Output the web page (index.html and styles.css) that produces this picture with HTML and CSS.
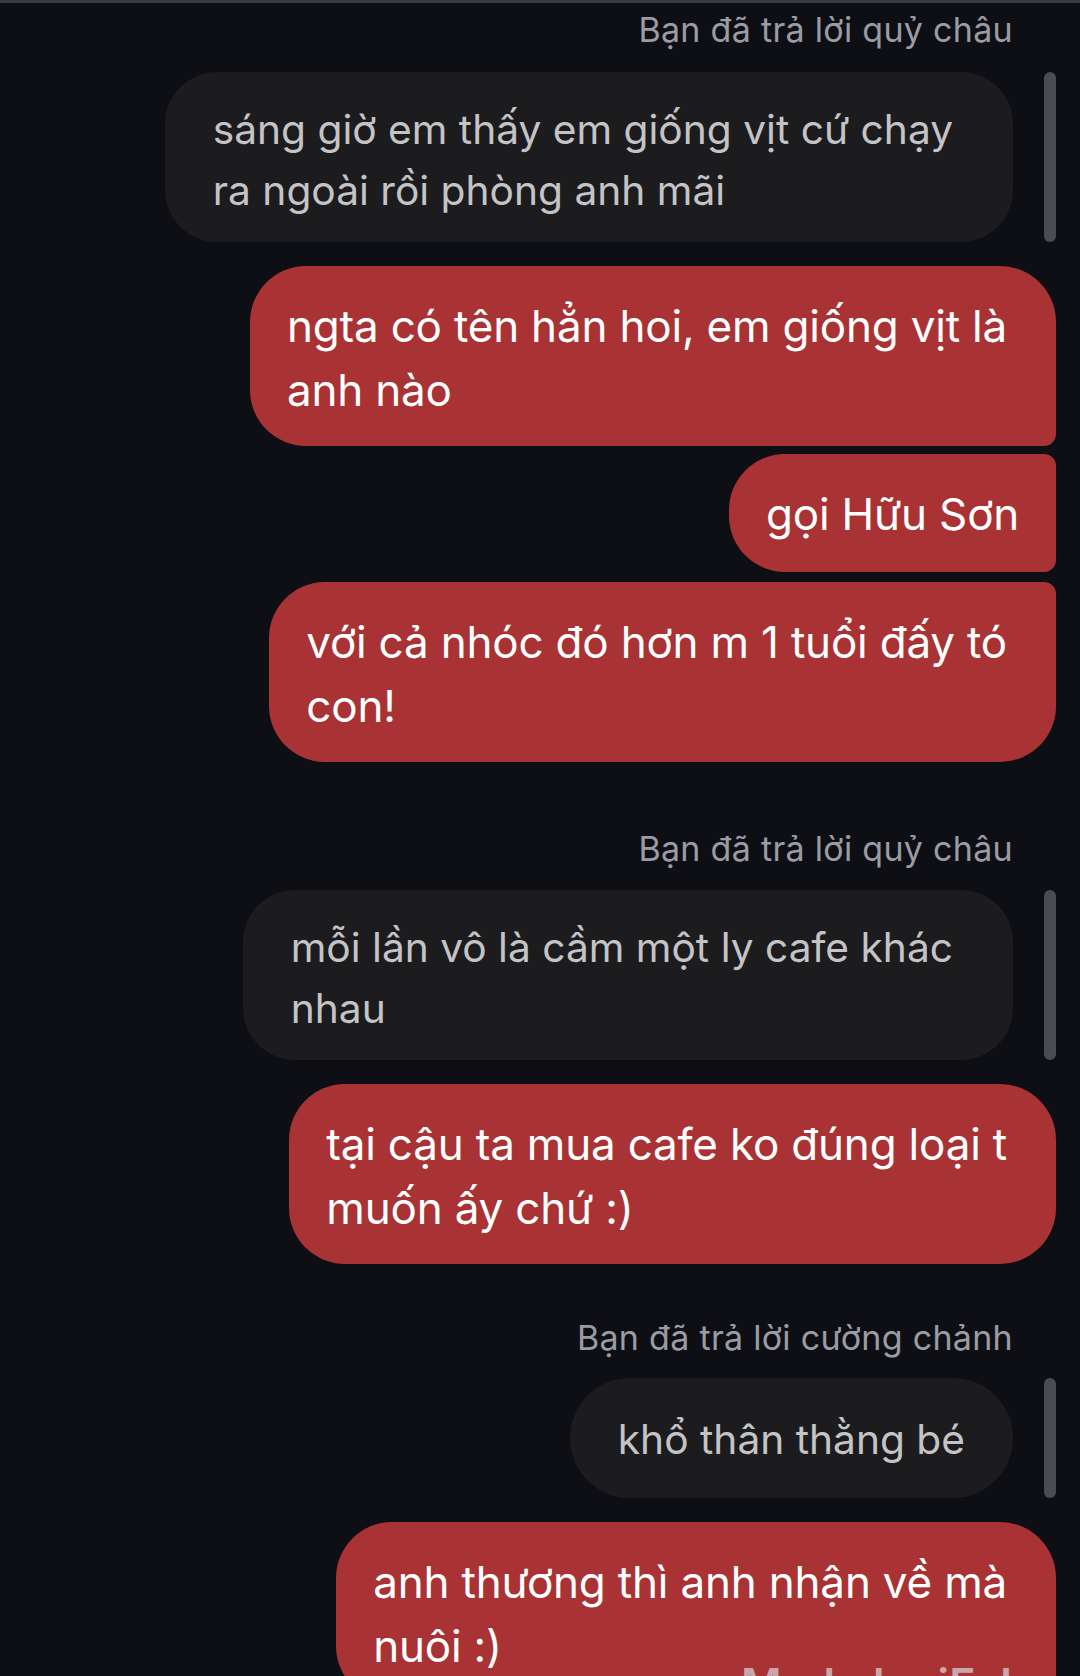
FILE: index.html
```html
<!DOCTYPE html>
<html lang="vi">
<head>
<meta charset="utf-8">
<title>Chat</title>
<link rel="stylesheet" href="styles.css">
</head>
<body>
<div class="screen">
  <div class="topline"></div>
  <main class="thread">
    <div class="reply-label first">Bạn đã trả lời quỷ châu</div>
    <div class="row-in">
      <div class="bubble grey wrap">sáng giờ em thấy em giống vịt cứ chạy<br>ra ngoài rồi phòng anh mãi</div>
      <div class="bar"></div>
    </div>
    <div class="bubble red wrap r-first gap-l">ngta có tên hẳn hoi, em giống vịt là<br>anh nào</div>
    <div class="bubble red r-mid gap-s">gọi Hữu Sơn</div>
    <div class="bubble red wrap r-last gap-m">với cả nhóc đó hơn m 1 tuổi đấy tó<br>con!</div>

    <div class="reply-label second">Bạn đã trả lời quỷ châu</div>
    <div class="row-in">
      <div class="bubble grey wrap">mỗi lần vô là cầm một ly cafe khác<br>nhau</div>
      <div class="bar"></div>
    </div>
    <div class="bubble red wrap gap-l">tại cậu ta mua cafe ko đúng loại t<br>muốn ấy chứ :)</div>

    <div class="reply-label third">Bạn đã trả lời cường chảnh</div>
    <div class="row-in">
      <div class="bubble grey single">khổ thân thằng bé</div>
      <div class="bar"></div>
    </div>
    <div class="bubble red wrap r-first gap-l">anh thương thì anh nhận về mà<br>nuôi :)</div>
  </main>
  <div class="watermark">Made by iFake</div>
</div>
</body>
</html>
```
FILE: styles.css
```css
html, body {
  margin: 0;
  padding: 0;
  background: #0e0f14;
}

.screen {
  position: relative;
  width: 1080px;
  height: 1676px;
  overflow: hidden;
  background: #0e0f14;
  font-family: Inter, "Noto Sans", "Liberation Sans", sans-serif;
}

.topline {
  height: 3px;
  background: #3a3b40;
}

.thread {
  display: flex;
  flex-direction: column;
  align-items: flex-end;
  padding: 0 24px 0 0;
}

.reply-label {
  font-size: 34px;
  line-height: 40px;
  color: #9b9ca3;
  margin-right: 43px;
  margin-bottom: 22px;
  letter-spacing: 0.3px;
}
.reply-label.first { margin-top: 7px; }
.reply-label.second { margin-top: 67px; margin-bottom: 21px; }
.reply-label.third { margin-top: 54px; margin-bottom: 20px; }

.row-in {
  display: flex;
  align-items: stretch;
  gap: 31px;
}

.bar {
  width: 12px;
  border-radius: 6px;
  background: #4b4c51;
}

.bubble {
  box-sizing: border-box;
  white-space: nowrap;
}

.grey {
  background: #1c1c1e;
  color: #c4c4c6;
  font-size: 40.7px;
  line-height: 61px;
  padding: 27px 48px 21px;
  border-radius: 52px;
  letter-spacing: 0;
}
.grey.wrap { padding-right: 60px; }
.grey.single {
  min-height: 120px;
  display: flex;
  align-items: center;
  padding-top: 3px;
  padding-bottom: 0;
  border-radius: 60px;
}

.red {
  background: #a93334;
  color: #ffffff;
  font-size: 44px;
  line-height: 64px;
  padding: 28px 37px 24px;
  min-height: 118px;
  border-radius: 56px;
  letter-spacing: -0.2px;
}
.red.wrap { padding-right: 49px; }

.r-first { border-bottom-right-radius: 12px; }
.r-mid { border-top-right-radius: 12px; border-bottom-right-radius: 12px; }
.r-last { border-top-right-radius: 12px; }

.gap-l { margin-top: 24px; }
.gap-m { margin-top: 10px; }
.gap-s { margin-top: 8px; }

.watermark {
  position: absolute;
  left: 741px;
  top: 1658px;
  font-size: 44px;
  line-height: 52px;
  font-weight: 600;
  color: #cba6a8;
  letter-spacing: 0.3px;
  white-space: nowrap;
}
```
